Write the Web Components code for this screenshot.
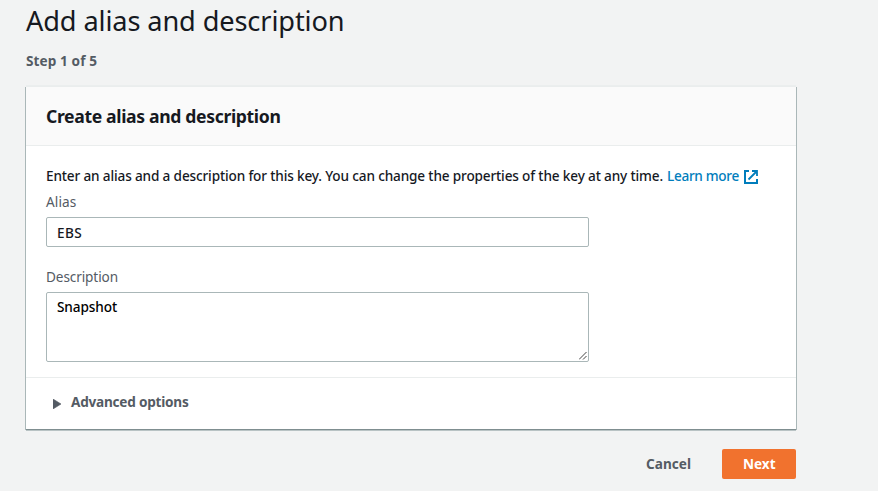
<!DOCTYPE html>
<html lang="en">
<head>
<meta charset="utf-8">
<title>Add alias and description</title>
<style>
body { margin: 0; background: #f2f3f3; color: #16191f; font: 500 13.6px/20px "Noto Sans", "Open Sans", sans-serif; overflow: hidden; }
</style>
</head>
<body>
<wizard-page></wizard-page>
<script>
const define = (name, html, init) => customElements.define(name, class extends HTMLElement {
  connectedCallback() {
    if (this.shadowRoot) return;
    const t = document.createElement('template');
    t.innerHTML = html;
    this.attachShadow({ mode: 'open' }).append(t.content.cloneNode(true));
    if (init) init.call(this, this.shadowRoot);
  }
});

// Single-line text tracked to an exact measure.
define('ui-text', `<style>:host{display:inline-block;white-space:nowrap}</style><slot></slot>`, function () {
  const w = parseFloat(this.getAttribute('w'));
  const natural = this.getBoundingClientRect().width;
  this.style.letterSpacing = ((w - natural) / this.textContent.length).toFixed(4) + 'px';
});

define('external-icon', `<style>:host{display:block;width:14px;height:14px}svg{display:block}</style>
<svg width="14" height="14" viewBox="0 0 14 14" fill="none" stroke="#007dbc"><path d="M5 1H1v12h12V9" stroke-width="2"/><path d="M8 1h5v5M12.5 1.5L4.5 9.5" stroke-width="1.8"/></svg>`);

define('ui-card', `<style>
:host{display:block;box-sizing:border-box;height:343px;background:#fff;border-top:1px solid #eaeded;
box-shadow:0 1px 0 0 #7f8e90,1px 1px 0 0 #aab7b8,-1px 1px 0 0 #aab7b8,0 2px 0 0 #b9c3c4,0 -1px 0 0 #ebeeee}
header{box-sizing:border-box;height:59px;padding:19px 20px 0;background:#fafafa;border-bottom:1px solid #eaeded;font-weight:700;font-size:17.6px;line-height:20px}
main{box-sizing:border-box;height:231px;padding:20px 20px 0}
footer{border-top:1px solid #eaeded;padding:14px 20px 0 27px}
</style><header><slot name="header"></slot></header><main><slot></slot></main><footer><slot name="footer"></slot></footer>`);

define('form-field', `<style>:host{display:block}.l{height:20px;color:#545b64;font-weight:450;margin-bottom:5px}</style>
<div class="l"><slot name="label"></slot></div><slot></slot>`);

define('text-box', `<style>
:host{display:flex;box-sizing:border-box;width:543px;height:30px;padding:5px 10px 0;background:#fff;border:1px solid #aab7b8;border-radius:2px;position:relative}
:host([multiline]){height:70px;padding-top:4px;color:#000}
svg{display:none;position:absolute;right:1px;bottom:1px}
:host([multiline]) svg{display:block}
</style><slot></slot><svg width="8" height="8" viewBox="0 0 8 8" stroke="#444" fill="none"><path d="M0 7.5L7.5 0M4 7.5L7.5 4"/></svg>`);

define('expand-toggle', `<style>:host{display:flex;gap:10px;color:#545b64;font-weight:700}svg{display:block;margin-top:7px}</style>
<svg width="8" height="10" viewBox="0 0 8 10"><path d="M0 0L8 5L0 10Z" fill="#545b64" stroke="#545b64" stroke-width=".6"/></svg><slot></slot>`);

define('ui-button', `<style>
:host{display:flex;box-sizing:border-box;height:30px;padding:5px 21px 0;border-radius:2px;font-weight:700;color:#545b64}
:host([primary]){width:74px;background:#f1722e;color:#fff}
</style><slot></slot>`);

define('wizard-page', `<style>
:host{display:block;box-sizing:border-box;width:796px;padding:4px 0 0 26px}
h1{margin:0;height:36px;font-weight:430;font-size:27.2px;line-height:34px}
.step{height:20px;margin:11px 0 15px;font-weight:700;color:#545b64}
.intro{display:flex;height:20px;margin-bottom:6px}
.link{display:flex;gap:5px;margin-left:4px;color:#007dbc}
external-icon{margin-top:4px}
.second{margin-top:20px}
.actions{display:flex;justify-content:flex-end;gap:10px;margin-top:20px}
</style>
<h1><ui-text w="318.5">Add alias and description</ui-text></h1>
<div class="step"><ui-text w="71">Step 1 of 5</ui-text></div>
<ui-card>
<ui-text slot="header" w="234.5">Create alias and description</ui-text>
<div class="intro"><ui-text w="617">Enter an alias and a description for this key. You can change the properties of the key at any time.</ui-text>
<div class="link"><ui-text w="72">Learn more</ui-text><external-icon></external-icon></div></div>
<form-field><ui-text slot="label" w="30.5">Alias</ui-text><text-box><ui-text w="25">EBS</ui-text></text-box></form-field>
<form-field class="second"><ui-text slot="label" w="72">Description</ui-text><text-box multiline><ui-text w="60">Snapshot</ui-text></text-box></form-field>
<expand-toggle slot="footer"><ui-text w="117.5">Advanced options</ui-text></expand-toggle>
</ui-card>
<div class="actions"><ui-button><ui-text w="45">Cancel</ui-text></ui-button><ui-button primary><ui-text w="32.5">Next</ui-text></ui-button></div>`);
</script>
</body>
</html>
